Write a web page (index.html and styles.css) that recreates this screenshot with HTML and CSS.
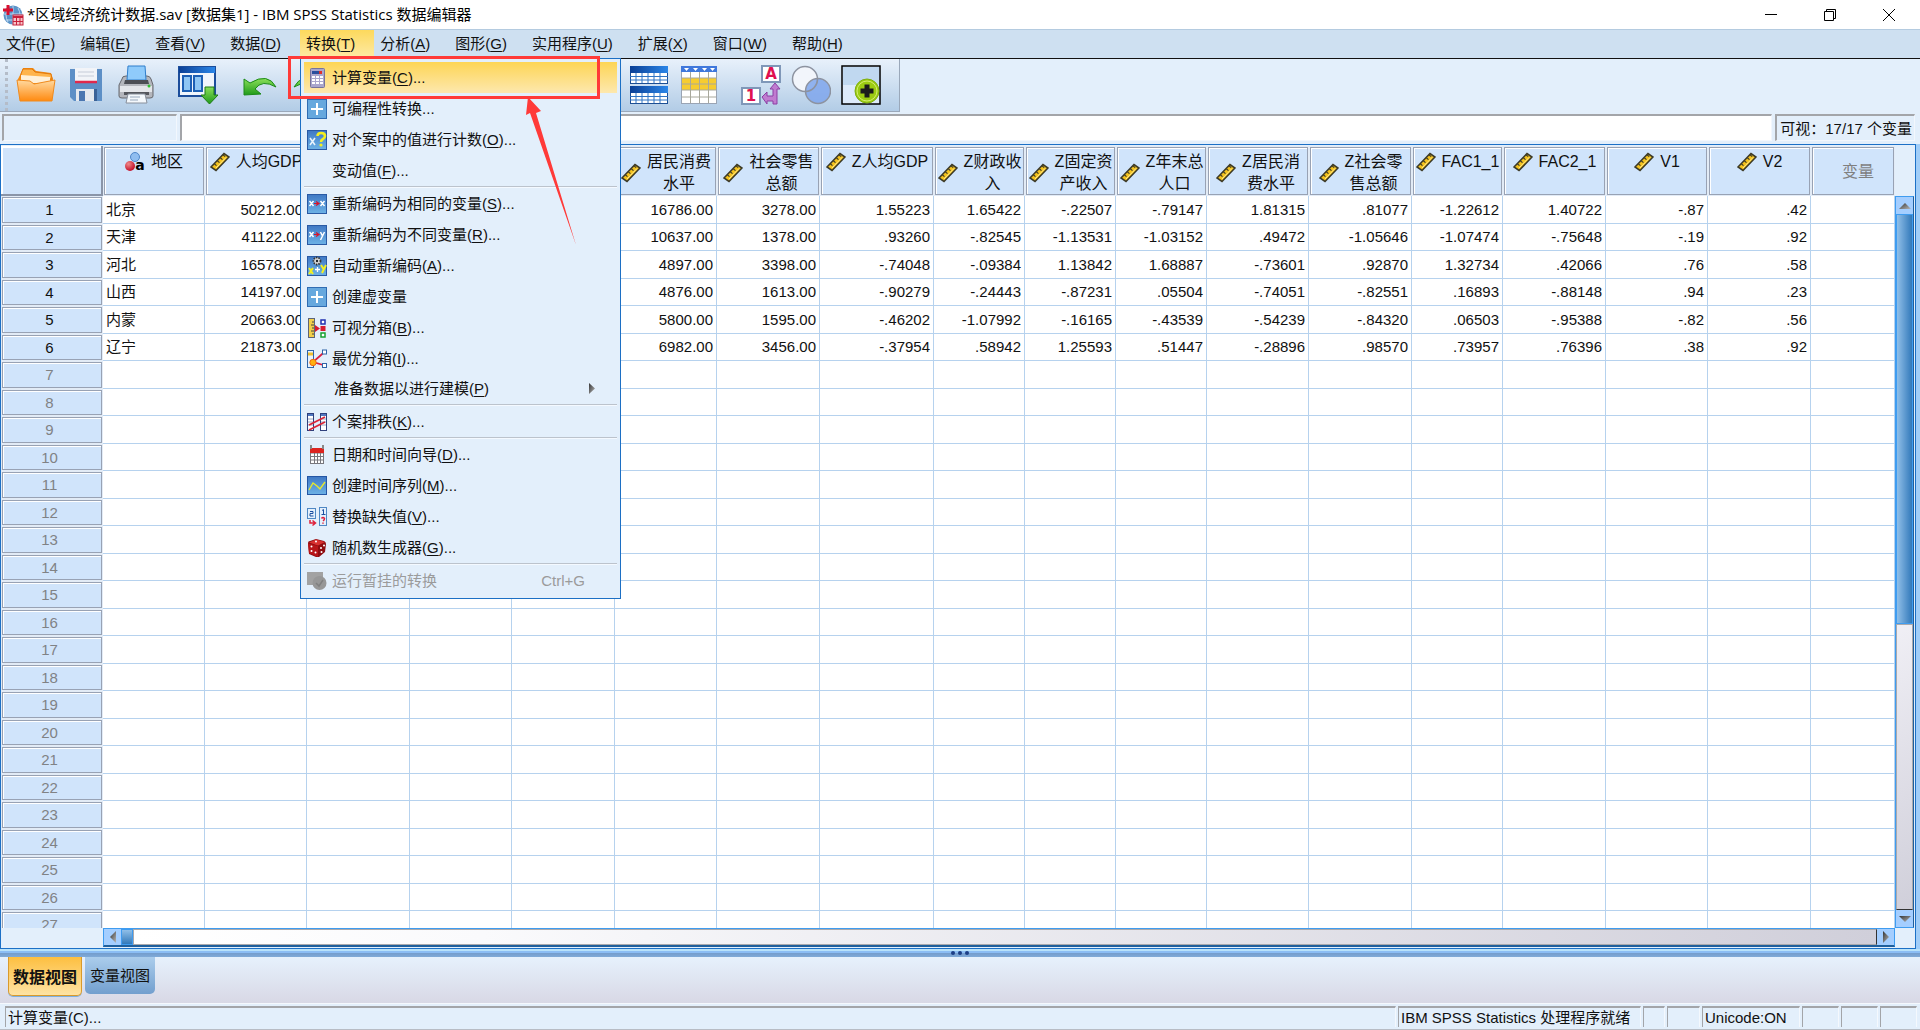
FILE: index.html
```html
<!DOCTYPE html>
<html lang="zh-CN">
<head>
    <meta charset="UTF-8">
    <meta name="viewport" content="width=device-width, initial-scale=1.0">
    <title>*区域经济统计数据.sav [数据集1] - IBM SPSS Statistics 数据编辑器</title>
    <link rel="stylesheet" href="styles.css">
</head>
<body>
    <svg class="sprites" aria-hidden="true">
        <defs>
            <linearGradient id="gOrange" x1="0" y1="0" x2="0" y2="1"><stop offset="0" stop-color="#ffd9a0"/><stop offset="1" stop-color="#ff8a10"/></linearGradient>
            <linearGradient id="gGreen" x1="0" y1="0" x2="0" y2="1"><stop offset="0" stop-color="#8be05a"/><stop offset="1" stop-color="#1f9a1a"/></linearGradient>
            <linearGradient id="gBlue" x1="0" y1="0" x2="0" y2="1"><stop offset="0" stop-color="#3f78c4"/><stop offset="1" stop-color="#6db2e6"/></linearGradient>
            <linearGradient id="gBar" x1="0" y1="0" x2="1" y2="0"><stop offset="0" stop-color="#0a3f95"/><stop offset="1" stop-color="#2b86e8"/></linearGradient>
            <linearGradient id="gArrow" x1="0" y1="0" x2="1" y2="1"><stop offset="0" stop-color="#333"/><stop offset="1" stop-color="#b8b8b8"/></linearGradient>
            <radialGradient id="gRed" cx="0.35" cy="0.3" r="0.7"><stop offset="0" stop-color="#f08a8a"/><stop offset="1" stop-color="#c4102a"/></radialGradient>
            <symbol id="ruler" viewBox="0 0 20 20">
                <path d="M1 15 L14 1.5 L19 5 L6 18.5 Z" fill="#f4c21c" stroke="#3c3a28" stroke-width="1.6"/>
                <path d="M4.5 12 l2 1.6 M7.5 9 l2 1.6 M10.5 6 l2 1.6 M13.2 3 l2 1.6" stroke="#3c3a28" stroke-width="1.2"/>
                <path d="M6 16 L16 5.5" stroke="#ffe98a" stroke-width="1"/>
            </symbol>
            <symbol id="plus" viewBox="0 0 20 20">
                <rect x="0.5" y="0.5" width="19" height="19" fill="#66a8de" stroke="#2f6cb2"/>
                <path d="M10 4 V16 M4 10 H16" stroke="#fff" stroke-width="2"/>
            </symbol>
        </defs>
    </svg>

    <div class="window">
        <header class="title-bar">
            <svg class="app-icon" viewBox="0 0 22 22">
                <circle cx="11" cy="11" r="9.5" fill="#5b93c8"/>
                <path d="M2 10 h18 M4 16 h14 M11 2 v18 M6 4 q-4 7 0 14 M16 4 q4 7 0 14" stroke="#b9d6ee" fill="none"/>
                <path d="M6 1 V11 M1 6 H11" stroke="#d9102f" stroke-width="3"/>
                <rect x="11" y="11" width="10" height="10" fill="#f7c3c8" stroke="#c8203a"/>
                <path d="M11 13 h10" stroke="#c8203a" stroke-width="2"/>
                <path d="M11 17.500 h10 M14.500 13 v8 M18 13 v8" stroke="#c8203a"/>
            </svg>
            <h1>*区域经济统计数据.sav [数据集1] - IBM SPSS Statistics 数据编辑器</h1>
            <div class="window-buttons">
                <button aria-label="最小化"><svg viewBox="0 0 12 12"><path d="M0 5.5 H12" stroke="#000"/></svg></button>
                <button aria-label="还原"><svg viewBox="0 0 12 12"><path d="M0.500 2.500 h9 v9 h-9 z M2.500 2.500 v-2 h9 v9 h-2" fill="none" stroke="#000"/></svg></button>
                <button aria-label="关闭"><svg viewBox="0 0 12 12"><path d="M0 0 L12 12 M12 0 L0 12" stroke="#000"/></svg></button>
            </div>
        </header>

        <nav>
            <ul class="menu-bar">
                <li><button>文件(<u>F</u>)</button></li>
                <li><button>编辑(<u>E</u>)</button></li>
                <li><button>查看(<u>V</u>)</button></li>
                <li><button>数据(<u>D</u>)</button></li>
                <li class="open">
                    <button>转换(<u>T</u>)</button>
                    <ul class="dropdown">
                        <li><button class="selected">
                            <svg viewBox="0 0 20 20"><rect x="3.500" y="0.500" width="14" height="19" rx="1" fill="#a9a6cc" stroke="#77749c"/><rect x="5" y="3" width="8" height="3" fill="#2a4f9c"/><rect x="12" y="3" width="3" height="3" fill="#e0302a"/><path d="M5 9 h3 M9 9 h3 M13 9 h3 M5 12 h3 M9 12 h3 M13 12 h3 M5 15 h3 M9 15 h3 M13 15 h3" stroke="#fff" stroke-width="2"/></svg>
                            <span>计算变量(<u>C</u>)...</span></button></li>
                        <li><button><svg><use href="#plus"/></svg><span>可编程性转换...</span></button></li>
                        <li><button>
                            <svg viewBox="0 0 20 20"><rect x="0.500" y="0.500" width="19" height="19" fill="url(#gBlue)" stroke="#2a5aa4"/><path d="M3 8 l5 7 M8 8 l-5 7" stroke="#e8f2fc" stroke-width="1.600"/><path d="M10.500 6 q0-3 3.500-3 q4 0 4 3 q0 2 -2 3 q-2 1 -2 3" stroke="#f3ef20" stroke-width="2.600" fill="none"/><circle cx="14" cy="15" r="1.600" fill="#f3ef20"/></svg>
                            <span>对个案中的值进行计数(<u>O</u>)...</span></button></li>
                        <li><button><i class="no-icon"></i><span>变动值(<u>F</u>)...</span></button></li>
                        <li class="separator"></li>
                        <li><button>
                            <svg viewBox="0 0 20 20"><rect x="0.500" y="0.500" width="19" height="19" fill="url(#gBlue)" stroke="#2a5aa4"/><path d="M2.500 7 l4 5 M6.500 7 l-4 5 M13.500 7 l4 5 M17.500 7 l-4 5" stroke="#fff" stroke-width="1.500"/><path d="M7 9.500 h4 m-2 -2 l3 2 l-3 2" stroke="#d8142c" stroke-width="1.200" fill="none"/></svg>
                            <span>重新编码为相同的变量(<u>S</u>)...</span></button></li>
                        <li><button>
                            <svg viewBox="0 0 20 20"><rect x="0.500" y="0.500" width="19" height="19" fill="url(#gBlue)" stroke="#2a5aa4"/><path d="M2.500 7 l4 5 M6.500 7 l-4 5 M13.500 7 l2 4 M17.500 7 l-4 8" stroke="#fff" stroke-width="1.500"/><path d="M7 9.500 h4 m-2 -2 l3 2 l-3 2" stroke="#d8142c" stroke-width="1.200" fill="none"/></svg>
                            <span>重新编码为不同变量(<u>R</u>)...</span></button></li>
                        <li><button>
                            <svg viewBox="0 0 20 20"><rect x="0.500" y="0.500" width="19" height="19" fill="url(#gBlue)" stroke="#2a5aa4"/><circle cx="10" cy="5" r="3.500" fill="#ddd" stroke="#333" stroke-width="1.800" stroke-dasharray="1.500 1"/><circle cx="10" cy="5" r="1.200" fill="#222"/><path d="M2 12 l4 6 M6 12 l-4 6 M14 9 l2.500 4 M19 9 l-4 8" stroke="#f3ef20" stroke-width="2"/><path d="M10.500 11 v5 M8 13.500 h5" stroke="#fff" stroke-width="1.300"/></svg>
                            <span>自动重新编码(<u>A</u>)...</span></button></li>
                        <li><button><svg><use href="#plus"/></svg><span>创建虚变量</span></button></li>
                        <li><button>
                            <svg viewBox="0 0 20 20"><rect x="1.500" y="0.500" width="6" height="19" fill="#f2cf4a" stroke="#5d6478"/><path d="M5 4 h2 M4 7 h3 M5 10 h2 M4 13 h3 M5 16 h2" stroke="#444"/><path d="M8 7 l5 3.500 l-5 3.500 z" fill="#d81c30"/><rect x="14" y="2" width="4" height="4" fill="#fff" stroke="#2030b0" stroke-width="1.500"/><rect x="13.500" y="8" width="5" height="5" fill="#d81c30"/><rect x="14" y="15" width="4" height="4" fill="#fff" stroke="#18a030" stroke-width="1.500"/></svg>
                            <span>可视分箱(<u>B</u>)...</span></button></li>
                        <li><button>
                            <svg viewBox="0 0 20 20"><rect x="0.500" y="1.500" width="6" height="17" fill="#e8f2fc" stroke="#2f64a8"/><path d="M1 5 h5" stroke="#f0c030" stroke-width="3"/><path d="M18 2.500 L6 13 L18 16.500" stroke="#dc2040" stroke-width="1.800" fill="none"/><circle cx="6" cy="13.500" r="3.200" fill="#ffb010" stroke="#f06a10"/><rect x="15.500" y="1" width="4" height="4" fill="#fff" stroke="#2f64a8"/><rect x="15.500" y="14.500" width="4" height="4" fill="#fff" stroke="#2f64a8"/></svg>
                            <span>最优分箱(<u>I</u>)...</span></button></li>
                        <li><button class="submenu"><i class="no-icon"></i><span>准备数据以进行建模(<u>P</u>)</span>
                            <svg class="submenu-arrow" viewBox="0 0 6 12"><path d="M0 0 L6 5.500 L0 11 Z" fill="url(#gArrow)"/></svg></button></li>
                        <li class="separator"></li>
                        <li><button>
                            <svg viewBox="0 0 20 20"><rect x="0.500" y="1.500" width="6" height="17" fill="#fff" stroke="#30407c"/><rect x="13.500" y="1.500" width="6" height="17" fill="#fff" stroke="#30407c"/><path d="M1 3 h5 M14 3 h5" stroke="#5078c0" stroke-width="2"/><path d="M1 7 h5 M1 10 h5 M1 13 h5 M14 7 h5 M14 10 h5 M14 13 h5" stroke="#9aa6c0"/><path d="M2 13 L18 5 M2 18 L18 10" stroke="#dc2436" stroke-width="1.800"/></svg>
                            <span>个案排秩(<u>K</u>)...</span></button></li>
                        <li class="separator"></li>
                        <li><button>
                            <svg viewBox="0 0 20 20"><rect x="3.500" y="8" width="13" height="10.500" fill="#fff" stroke="#77777d"/><path d="M4 11.500 h12 M4 15 h12 M7.500 8 v10 M10.500 8 v10 M13.500 8 v10" stroke="#77777d"/><rect x="3" y="3" width="14" height="5" fill="#dc2420"/><path d="M4 0 v4 M16 0 v4" stroke="#888" stroke-width="2"/></svg>
                            <span>日期和时间向导(<u>D</u>)...</span></button></li>
                        <li><button>
                            <svg viewBox="0 0 20 20"><rect x="0.500" y="0.500" width="19" height="18" fill="url(#gBlue)" stroke="#2456a4"/><path d="M2 14 L6 7 L10 10 L13 13 L18 6" stroke="#e8e82c" stroke-width="1.400" fill="none"/></svg>
                            <span>创建时间序列(<u>M</u>)...</span></button></li>
                        <li><button>
                            <svg viewBox="0 0 20 20"><rect x="0.500" y="1.500" width="8" height="10" fill="#e4f0fc" stroke="#4f88c4"/><path d="M3 4.500 h3 v2 h-3 v2.500 h3.500" stroke="#1c50a0" fill="none"/><rect x="12.500" y="0.500" width="7" height="18" fill="#e4f0fc" stroke="#4f88c4"/><path d="M15 3.500 l1.500 -1 v5 M14.500 7.500 h4" stroke="#1c50a0" fill="none"/><path d="M14.500 11.500 q1.500 -2 3 0 q0 1.500 -1.500 2.500 m0 1.500 v1.200 M3 13 v3 h5 m-2.500 -2.500 l3 2.500 l-3 2.500" stroke="#e0203a" stroke-width="1.500" fill="none"/></svg>
                            <span>替换缺失值(<u>V</u>)...</span></button></li>
                        <li><button>
                            <svg viewBox="0 0 20 20"><path d="M1 5 Q1 3 3 3 L9 1 L17 3 Q19 4 19 6 L18 14 L12 19 L9 19 L2 16 Z" fill="#8e0c10"/><path d="M2 4.500 L9 1.500 L18 4 L11 7.500 Z" fill="#d83030"/><path d="M1 5.500 L11 8 L11 19 L2 15 Z" fill="#b81418"/><g fill="#fff"><circle cx="4.500" cy="8.500" r="1"/><circle cx="8.500" cy="14.500" r="1"/><circle cx="4.500" cy="13" r="1"/><circle cx="14" cy="10" r="1"/><circle cx="17" cy="7.500" r="1"/><circle cx="14.500" cy="14" r="1"/><circle cx="9" cy="3.500" r="1"/></g></svg>
                            <span>随机数生成器(<u>G</u>)...</span></button></li>
                        <li class="separator"></li>
                        <li><button disabled>
                            <svg viewBox="0 0 20 20"><rect x="0" y="1" width="16" height="13" fill="#a2a2a2"/><circle cx="12.500" cy="12" r="7" fill="#979797"/><path d="M9 12 l3 3 l4 -6" stroke="#808080" fill="none" stroke-width="1.500"/></svg>
                            <span>运行暂挂的转换</span><kbd>Ctrl+G</kbd></button></li>
                    </ul>
                </li>
                <li><button>分析(<u>A</u>)</button></li>
                <li><button>图形(<u>G</u>)</button></li>
                <li><button>实用程序(<u>U</u>)</button></li>
                <li><button>扩展(<u>X</u>)</button></li>
                <li><button>窗口(<u>W</u>)</button></li>
                <li><button>帮助(<u>H</u>)</button></li>
            </ul>
        </nav>

        <div class="toolbar">
            <div class="tool-group">
                <button aria-label="打开"><svg viewBox="0 0 40 40"><path d="M2 14 L5 8 L7 3 L17 3 L20 6 L35 8 L37 14 L36 34 L4 34 Z" fill="#f58a10"/><path d="M5 9 L7 4 L16 4 L19 7 L35 9 L36 14 L5 13 Z" fill="#ffb44c" stroke="#e2790c"/><path d="M5 10 L34 12 V18 H5 Z" fill="#fff0d8"/><path d="M1 15 L14 16 L18 19 L39 15 L36 36 L4 36 Z" fill="url(#gOrange)" stroke="#f08a1c"/></svg></button>
                <button aria-label="保存"><svg viewBox="0 0 40 40"><path d="M4 4 H36 V36 H8 L4 32 Z" fill="#5d8fc6"/><rect x="9" y="3" width="22" height="15" fill="#f2f4f8"/><path d="M12 7 h16 M12 11 h16" stroke="#c6ccd8"/><path d="M9 17 h22" stroke="#e0284c" stroke-width="2.500"/><rect x="10" y="24" width="18" height="12" fill="#e4e8ee"/><rect x="13" y="26" width="6" height="10" fill="#4b76b0"/><rect x="28" y="24" width="3" height="12" fill="#3b6296"/></svg></button>
                <button aria-label="打印"><svg viewBox="0 0 40 40"><path d="M6 14 Q6 11 10 11 H31 Q34 11 35 14 L37 20 V31 Q37 33 34 33 H6 Q3 33 3 31 V20 Z" fill="#b4b6bc" stroke="#66686e"/><path d="M11 15 L12 1 H29 L30 15 Z" fill="#8fcbfb" stroke="#2f7ecc"/><path d="M9 15 H32 L33 19 H8 Z" fill="#4c4e54"/><path d="M4 21 H36 V27 H4 Z" fill="#e4e6ea"/><circle cx="33" cy="21" r="1.500" fill="#30c030"/><path d="M8 27 H33 V30 H8 Z" fill="#55575d"/><path d="M12 29 H29 L31 38 H10 Z" fill="#f4f8fc" stroke="#88909c"/><path d="M14 32 h10 M14 35 h8" stroke="#98a8bc"/></svg></button>
            </div>
            <div class="tool-group">
                <button aria-label="对话框撤回"><svg viewBox="0 0 40 40"><rect x="1" y="2" width="36" height="29" fill="#f0f5fc" stroke="#1c4d9a" stroke-width="2"/><rect x="1" y="2" width="36" height="6" fill="url(#gBar)"/><path d="M5 11 h8 v15 h-8 z M16 11 h8 v15 h-8 z" fill="#8ec6f4" stroke="#1c5fb4" stroke-width="2"/><path d="M27 22 h9 v8 h4 l-8.500 9 l-8.500 -9 h4 z" fill="url(#gGreen)" stroke="#1c7a14"/></svg></button>
            </div>
            <div class="tool-group">
                <button aria-label="撤销"><svg viewBox="0 0 40 40"><path d="M4 14 L4 30 L21 29 L15 24 Q22 14 36 22 Q28 7 10 18 Z" fill="url(#gGreen)" stroke="#1c8a18"/></svg></button>
                <button aria-label="重做"><svg viewBox="0 0 40 40"><path d="M36 14 L36 30 L19 29 L25 24 Q18 14 4 22 Q12 7 30 18 Z" fill="url(#gGreen)" stroke="#1c8a18"/></svg></button>
            </div>
            <div class="tool-group after-menu">
                <button aria-label="拆分文件"><svg viewBox="0 0 40 40"><g id="sheet"><rect x="1.500" y="1.500" width="37" height="17" fill="#fff" stroke="#1d4f94"/><rect x="1" y="1" width="38" height="7" fill="url(#gBar)"/><path d="M1 11.500 h38 M1 15 h38 M7 8 v10 M13 8 v10 M19 8 v10 M25 8 v10 M31 8 v10" stroke="#2f74c4"/></g><use href="#sheet" y="20"/></svg></button>
                <button aria-label="选择个案"><svg viewBox="0 0 40 40"><rect x="2.500" y="1.500" width="35" height="37" fill="#fff" stroke="#9aa4b4"/><rect x="2" y="1" width="36" height="6" fill="#3f78dc"/><path d="M5 3 h5 l-2.500 3 z M14 3 h5 l-2.500 3 z M23 3 h5 l-2.500 3 z M31 3 h5 l-2.500 3 z" fill="#fff"/><rect x="3" y="13" width="34" height="12" fill="#f6cc30"/><path d="M3 13 h34 M3 19 h34 M3 25 h34 M3 32 h34 M11.500 7 v31 M20.500 7 v31 M29.500 7 v31" stroke="#a8a89c"/></svg></button>
            </div>
            <div class="tool-group">
                <button aria-label="值标签"><svg viewBox="0 0 40 40"><rect x="21" y="1" width="18" height="16" fill="#fff" stroke="#7f97b8" stroke-width="2"/><text class="icon-letter" x="30" y="14">A</text><rect x="1" y="23" width="18" height="16" fill="#fff" stroke="#7f97b8" stroke-width="2"/><text class="icon-letter" x="10" y="36">1</text><path d="M32 39 V36 H26 V39 L21 32 L26 27 V31 H32 V24 H29 L34 18 L39 24 H36 V39 Z" fill="#c07cd0" stroke="#8c3fa4"/></svg></button>
                <button aria-label="使用变量集"><svg viewBox="0 0 40 40"><circle cx="14" cy="14" r="12.500" fill="#f2f5fb" stroke="#8d93a0" stroke-width="1.500"/><circle cx="27" cy="26" r="12.500" fill="#7fa6ec" fill-opacity="0.850" stroke="#8d93a0" stroke-width="1.500"/><path d="M26.500 14 A12.500 12.500 0 0 1 14.500 26.500" fill="none" stroke="#8d93a0" stroke-width="1.500"/></svg></button>
                <button aria-label="定制工具栏"><svg viewBox="0 0 40 40"><rect x="1" y="1" width="38" height="38" fill="#ddeafa" stroke="#000" stroke-width="1.500"/><rect x="2" y="2" width="36" height="18" fill="#c0d8f0"/><circle cx="26" cy="26" r="12" fill="#9ccc12" stroke="#7fae10"/><circle cx="26" cy="26" r="10" fill="none" stroke="#d4ec70"/><path d="M26 19.500 v13 M19.500 26 h13" stroke="#1c1c1c" stroke-width="5"/></svg></button>
            </div>
        </div>

        <div class="cell-editor">
            <input class="cell-name" type="text" aria-label="单元格" readonly>
            <input class="cell-value" type="text" aria-label="单元格值">
            <span class="visible-count">可视：17/17 个变量</span>
        </div>

        <main class="data-frame">
            <div class="sheet-view">
                <table class="sheet">
                    <colgroup>
                        <col class="col-a"><col class="col-a"><col class="col-a"><col class="col-b"><col class="col-a"><col class="col-b"><col class="col-a"><col class="col-b"><col class="col-wide"><col class="col-narrow"><col class="col-narrow"><col class="col-narrow"><col class="col-a"><col class="col-b"><col class="col-narrow"><col class="col-b"><col class="col-a"><col class="col-b"><col>
                    </colgroup>
                    <thead><tr id="head"></tr></thead>
                    <tbody id="body"></tbody>
                </table>
            </div>
            <div class="scroll-v">
                <button aria-label="向上"><svg viewBox="0 0 12 8"><path d="M0 7 L6 1 L12 7 Z" fill="url(#gArrow)"/></svg></button>
                <div class="thumb"></div>
                <div class="track"></div>
                <button aria-label="向下"><svg viewBox="0 0 12 8"><path d="M0 1 L6 7 L12 1 Z" fill="url(#gArrow)"/></svg></button>
            </div>
            <div class="scroll-h">
                <button aria-label="向左"><svg viewBox="0 0 8 12"><path d="M7 0 L1 6 L7 12 Z" fill="url(#gArrow)"/></svg></button>
                <div class="thumb"></div>
                <div class="track"></div>
                <button aria-label="向右"><svg viewBox="0 0 8 12"><path d="M1 0 L7 6 L1 12 Z" fill="url(#gArrow)"/></svg></button>
            </div>
        </main>

        <div class="splitter"><i></i><i></i><i></i></div>

        <div class="view-tabs">
            <button class="active">数据视图</button>
            <button>变量视图</button>
        </div>

        <footer class="status-bar">
            <span class="status-message">计算变量(C)...</span>
            <span class="status-processor">IBM SPSS Statistics 处理程序就绪</span>
            <span class="status-tiny"></span>
            <span class="status-small"></span>
            <span class="status-unicode">Unicode:ON</span>
            <span class="status-medium"></span>
            <span class="status-medium"></span>
            <span class="status-medium"></span>
        </footer>

        <svg class="annotation" viewBox="0 0 320 200" aria-hidden="true">
            <rect x="1.500" y="1.500" width="309" height="40" fill="none" stroke="#ff3a38" stroke-width="3"/>
            <path d="M240 41 L253 55 L248 57 L288 189 L242 57 L238 59 Z" fill="#ff3a38"/>
        </svg>
    </div>

    <script>
        const columns = ["地区", "人均GDP", "", "", "", "居民消费<br>水平", "社会零售<br>总额", "Z人均GDP", "Z财政收<br>入", "Z固定资<br>产收入", "Z年末总<br>人口", "Z居民消<br>费水平", "Z社会零<br>售总额", "FAC1_1", "FAC2_1", "V1", "V2"];

        const rows = [
            ["北京", "50212.00", "", "", "", "16786.00", "3278.00", "1.55223", "1.65422", "-.22507", "-.79147", "1.81315", ".81077", "-1.22612", "1.40722", "-.87", ".42"],
            ["天津", "41122.00", "", "", "", "10637.00", "1378.00", ".93260", "-.82545", "-1.13531", "-1.03152", ".49472", "-1.05646", "-1.07474", "-.75648", "-.19", ".92"],
            ["河北", "16578.00", "", "", "", "4897.00", "3398.00", "-.74048", "-.09384", "1.13842", "1.68887", "-.73601", ".92870", "1.32734", ".42066", ".76", ".58"],
            ["山西", "14197.00", "", "", "", "4876.00", "1613.00", "-.90279", "-.24443", "-.87231", ".05504", "-.74051", "-.82551", ".16893", "-.88148", ".94", ".23"],
            ["内蒙", "20663.00", "", "", "", "5800.00", "1595.00", "-.46202", "-1.07992", "-.16165", "-.43539", "-.54239", "-.84320", ".06503", "-.95388", "-.82", ".56"],
            ["辽宁", "21873.00", "", "", "", "6982.00", "3456.00", "-.37954", ".58942", "1.25593", ".51447", "-.28896", ".98570", ".73957", ".76396", ".38", ".92"]
        ];

        const ruler = '<svg><use href="#ruler"/></svg>';
        const nominal = '<svg viewBox="0 0 20 20"><circle cx="10" cy="5" r="4.500" fill="#8fbdf0" stroke="#4f86c8"/><circle cx="5" cy="14" r="5" fill="url(#gRed)"/><text class="nominal-letter" x="15" y="18">a</text></svg>';

        let head = '<th class="corner"></th>';
        columns.forEach((name, i) => {
            const icon = i === 0 ? nominal : ruler;
            head += '<th scope="col"><div class="var-name">' + (name ? icon : "") + "<span>" + name + "</span></div></th>";
        });
        head += '<th class="unused">变量</th>';
        document.getElementById("head").innerHTML = head;

        let body = "";
        for (let r = 0; r < 27; r++) {
            const row = rows[r] || [];
            body += '<tr><th scope="row"' + (rows[r] ? "" : ' class="empty"') + ">" + (r + 1) + "</th>";
            for (let c = 0; c <= columns.length; c++) {
                body += "<td>" + (row[c] || "") + "</td>";
            }
            body += "</tr>";
        }
        document.getElementById("body").innerHTML = body;
    </script>
</body>
</html>
```

FILE: styles.css
```css
* {
    box-sizing: border-box;
}

body {
    margin: 0;
    font-family: "Liberation Sans", "Noto Sans CJK SC", sans-serif;
    font-size: 15px;
    line-height: 20px;
    color: #111;
    background-color: #e3effb;
}

button {
    font: inherit;
    color: inherit;
    border: none;
    background: none;
    padding: 0;
    cursor: pointer;
}

ul {
    list-style: none;
    margin: 0;
    padding: 0;
}

u {
    text-underline-offset: 2px;
}

.sprites {
    position: absolute;
    width: 0;
    height: 0;
}

.window {
    position: relative;
    display: flex;
    flex-direction: column;
    height: 100vh;
    overflow: hidden;
}

/* title */
.title-bar {
    display: flex;
    align-items: center;
    height: 29px;
    padding: 0 2px;
    background-color: #fff;
}

.app-icon {
    width: 22px;
    height: 22px;
    margin-right: 3px;
}

.title-bar h1 {
    flex: 1;
    margin: 0;
    font-family: "Open Sans", "Noto Sans CJK SC", sans-serif;
    font-size: 15px;
    font-weight: normal;
    line-height: 20px;
    padding-bottom: 2px;
    color: #000;
}

.window-buttons {
    display: flex;
}

.window-buttons button {
    width: 59px;
    height: 28px;
}

.window-buttons svg {
    display: block;
    width: 12px;
    height: 12px;
    margin: 0 auto;
}

/* menu bar */
.menu-bar {
    display: flex;
    height: 30px;
    background-color: #cee0f1;
    border-top: 1px solid #b4cbe0;
    border-bottom: 1px solid #111;
}

.menu-bar > li {
    position: relative;
}

.menu-bar > li > button {
    height: 28px;
    padding: 0 19px 0 6px;
}

.menu-bar > .open > button {
    background: linear-gradient(#fdd95c, #fdeaa6);
}

.dropdown {
    position: absolute;
    z-index: 2;
    top: 28px;
    left: 0;
    width: 321px;
    padding: 3px 3px 2px;
    border: 1px solid #1c6fc4;
    background-color: #e3effb;
}

.dropdown button {
    display: flex;
    align-items: center;
    gap: 5px;
    width: 100%;
    height: 31px;
    padding-left: 3px;
    white-space: nowrap;
    text-align: left;
}

.dropdown button.selected {
    background: linear-gradient(#fdd555, #fde8ae);
}

.dropdown button.submenu {
    height: 30px;
}

.dropdown button:disabled {
    color: #9b9b9b;
}

.dropdown svg,
.no-icon {
    flex: none;
    width: 20px;
    height: 20px;
}

.submenu .no-icon {
    width: 22px;
}

.dropdown .submenu-arrow {
    width: 6px;
    height: 12px;
    margin-left: auto;
    margin-right: 22px;
}

.dropdown kbd {
    margin-left: auto;
    margin-right: 32px;
    font-family: inherit;
}

.separator {
    height: 2px;
    border-top: 1px solid #bcc3cc;
    border-bottom: 1px solid #f4f9ff;
}

/* toolbar */
.toolbar {
    display: flex;
    align-self: flex-start;
    gap: 12px;
    height: 53px;
    padding: 0 13px 0 5px;
    border-right: 1px solid #9aa8ba;
    border-bottom: 1px solid #9aa8ba;
    background: linear-gradient(#e8f1fb, #b2cce6);
}

.toolbar::before {
    content: "";
    width: 0;
    margin-right: -9px;
    border-left: 3px dotted #b4bcc8;
}

.tool-group {
    display: flex;
}

.after-menu {
    margin-left: 277px;
}

.tool-group button {
    width: 50px;
    height: 52px;
}

.tool-group svg {
    display: block;
    width: 40px;
    height: 40px;
    margin: 0 auto;
}

.icon-letter {
    font: bold 15px "DejaVu Sans", sans-serif;
    fill: #e01050;
    text-anchor: middle;
}

/* cell editor */
.cell-editor {
    display: flex;
    gap: 3px;
    height: 32px;
    padding: 2px 5px 3px 2px;
}

.cell-editor input,
.visible-count {
    min-width: 0;
    border: 1px solid #f2f7fd;
    border-top: 2px solid #a3a5a9;
    border-left: 2px solid #a3a5a9;
    background-color: #e3effb;
}

.cell-editor .cell-name {
    width: 175px;
}

.cell-editor .cell-value {
    flex: 1;
    background-color: #fff;
}

.visible-count {
    padding: 3px 2px 0 3px;
    white-space: nowrap;
}

/* data sheet */
.data-frame {
    flex: 1;
    display: grid;
    grid-template-columns: minmax(0, 1fr) 20px;
    grid-template-rows: minmax(0, 1fr) 20px;
    min-height: 0;
    margin-right: 4px;
    padding-top: 1px;
    border: 1px solid #1c70c6;
    box-shadow: 4px 0 0 #a0cdf8;
}

.sheet-view {
    overflow: hidden;
}

.sheet {
    width: 100%;
    table-layout: fixed;
    border-collapse: separate;
    border-spacing: 0;
    background-color: #fff;
}

.col-a {
    width: 102px;
}

.col-b {
    width: 103px;
}

.col-wide {
    width: 114px;
}

.col-narrow {
    width: 91px;
}

.sheet th {
    padding: 0;
    font-weight: normal;
    background-color: #d0e4fb;
    box-shadow: inset 0 0 0 1px #e2ebf6, inset 0 0 0 2px #98a2b4, inset 3px 3px 0 #fff;
}

.sheet thead th {
    height: 50px;
    padding-top: 5px;
    vertical-align: top;
    font-size: 16px;
    line-height: 22px;
}

.sheet thead .corner {
    box-shadow: inset -2px -2px 0 #8a95a8, inset 2px 2px 0 #fff;
}

.sheet thead .unused {
    padding: 2px 0 0 10px;
    vertical-align: middle;
    color: #7f7f7f;
}

.var-name {
    display: flex;
    align-items: center;
    justify-content: center;
    gap: 6px;
    white-space: nowrap;
}

.var-name svg {
    flex: none;
    width: 20px;
    height: 20px;
}

.nominal-letter {
    font: bold 14px "DejaVu Sans", sans-serif;
    text-anchor: middle;
}

.sheet td {
    padding: 0 3px;
    text-align: right;
    border-right: 1px solid #b6d2ee;
    border-bottom: 1px solid #b6d2ee;
}

.sheet td:nth-child(2) {
    text-align: left;
}

.sheet tbody tr {
    height: 28px;
}

.sheet tbody tr:nth-child(even) {
    height: 27px;
}

.sheet tbody th {
    padding-right: 5px;
}

.sheet th.empty {
    color: #808285;
}

/* scroll bars */
.scroll-v,
.scroll-h {
    display: flex;
    border: 1px solid #3f9cf0;
}

.scroll-v {
    flex-direction: column;
    width: 19px;
    margin-top: 50px;
    border-right-color: #1f5f9c;
}

.scroll-h {
    height: 19px;
    margin-left: 102px;
    border-bottom: 2px solid #1f5f9c;
}

.scroll-v button,
.scroll-h button {
    flex: none;
    display: flex;
    align-items: center;
    justify-content: center;
    background-color: #a4ceff;
}

.scroll-v button {
    height: 17px;
}

.scroll-h button {
    width: 17px;
}

.scroll-v svg {
    width: 12px;
    height: 8px;
}

.scroll-h svg {
    width: 8px;
    height: 12px;
}

.scroll-v .thumb {
    flex: 59;
    border: 1px solid #3f9cf0;
    background: linear-gradient(to right, #90bfe8, #3279ba);
}

.scroll-v .track {
    flex: 41;
    border: 1px solid #a9a9ad;
    border-bottom-color: #333;
    background: linear-gradient(150deg, #f0eff5, #d0cfda);
}

.scroll-h .thumb {
    width: 12px;
    border: 1px solid #3f9cf0;
    background: linear-gradient(#90bfe8, #3279ba);
}

.scroll-h .track {
    flex: 1;
    border: 1px solid #a9a9ad;
    border-right-color: #333;
    background: linear-gradient(to right, #fff, #fafafc 20%, #d0cfda);
}

.splitter {
    display: flex;
    justify-content: center;
    align-items: center;
    gap: 3px;
    height: 8px;
    background: linear-gradient(#b8e2fa 0, #b8e2fa 25%, #8abdf4 25%, #8abdf4 50%, #739ccc 50%, #7faad8);
}

.splitter i {
    width: 4px;
    height: 4px;
    border-radius: 2px;
    background-color: #1c3f86;
}

/* view tabs */
.view-tabs {
    display: flex;
    align-items: flex-start;
    gap: 3px;
    height: 46px;
    padding-left: 8px;
    background: linear-gradient(#e6f1fc, #d8d8e5);
}

.view-tabs button {
    width: 70px;
    height: 37px;
    border-radius: 0 0 5px 5px;
    background: linear-gradient(#abcdec, #729fce);
}

.view-tabs .active {
    width: 74px;
    height: 39px;
    padding-top: 4px;
    font-size: 16px;
    font-weight: bold;
    border: 1px solid #d99a2c;
    border-top: none;
    background: linear-gradient(#fdbf40, #fee3a4);
    box-shadow: 0 1px 0 #7fb0de;
}

/* status bar */
.status-bar {
    display: flex;
    gap: 2px;
    height: 27px;
    padding: 2px 3px 2px 5px;
    border-top: 1px solid #f4f8fd;
    border-bottom: 1px solid #b8bcc4;
}

.status-bar span {
    padding: 0 2px;
    white-space: nowrap;
    border-top: 2px solid #a3a5a9;
    border-left: 1px solid #a3a5a9;
    border-right: 1px solid #f4f8fd;
}

.status-bar .status-message {
    flex: 1;
}

.status-processor {
    width: 243px;
}

.status-tiny {
    width: 22px;
}

.status-small {
    width: 33px;
}

.status-medium {
    width: 37px;
}

.status-unicode {
    width: 98px;
}

.annotation {
    position: absolute;
    z-index: 3;
    top: 56px;
    left: 288px;
    width: 320px;
    height: 200px;
}
```
